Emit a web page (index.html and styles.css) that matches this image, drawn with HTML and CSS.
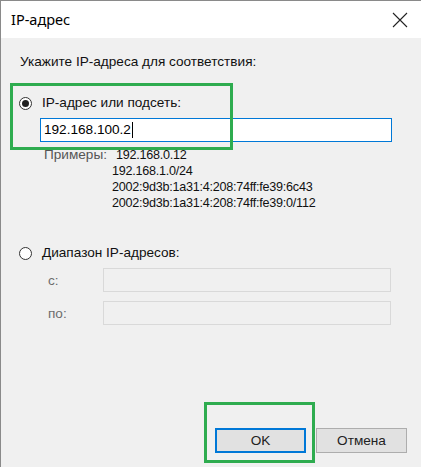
FILE: index.html
```html
<!DOCTYPE html>
<html lang="ru">
<head>
<meta charset="utf-8">
<title>IP-адрес</title>
<link rel="stylesheet" href="styles.css">
</head>
<body>
<div class="window">
  <div class="titlebar">
    <span class="title">IP-адрес</span>
    <svg class="close" width="16" height="16" viewBox="0 0 16 16"><path d="M1 1 L15 15 M15 1 L1 15" stroke="#222" stroke-width="1.1" fill="none"/></svg>
  </div>
  <div class="content">
    <div class="intro">Укажите IP-адреса для соответствия:</div>
    <div class="radio-row first">
      <span class="radio checked"></span>
      <span class="label">IP-адрес или подсеть:</span>
    </div>
    <div class="ip-input">192.168.100.2<span class="caret"></span></div>
    <div class="examples">
      <span class="ex-label">Примеры:</span>
      <div class="ex-values">
        <div class="ex-first">192.168.0.12</div>
        <div>192.168.1.0/24</div>
        <div>2002:9d3b:1a31:4:208:74ff:fe39:6c43</div>
        <div>2002:9d3b:1a31:4:208:74ff:fe39:0/112</div>
      </div>
    </div>
    <div class="radio-row second">
      <span class="radio"></span>
      <span class="label">Диапазон IP-адресов:</span>
    </div>
    <div class="range-row from">
      <span class="range-label">с:</span>
      <span class="range-input"></span>
    </div>
    <div class="range-row to">
      <span class="range-label">по:</span>
      <span class="range-input"></span>
    </div>
    <div class="spacer"></div>
    <div class="buttons">
      <button class="btn default">OK</button>
      <button class="btn">Отмена</button>
    </div>
  </div>
  <div class="mark mark-ip"></div>
  <div class="mark mark-ok"></div>
</div>
</body>
</html>
```

FILE: styles.css
```css
* { box-sizing: border-box; }
html, body { margin: 0; padding: 0; }
body {
  width: 421px;
  height: 467px;
  overflow: hidden;
  font-family: "Liberation Sans", Arial, sans-serif;
  font-size: 13.6px;
  color: #000;
  background: #f0f0f0;
}
.window {
  position: relative;
  width: 421px;
  height: 467px;
  border-top: 1px solid #8a8a8a;
  border-left: 1px solid #8a8a8a;
  display: flex;
  flex-direction: column;
  background: #f0f0f0;
}
.titlebar {
  height: 37px;
  flex: none;
  background: #fff;
  display: flex;
  align-items: center;
  justify-content: space-between;
  padding: 0 13px 0 10px;
}
.title {
  font-family: "Noto Sans", "Liberation Sans", sans-serif;
  font-size: 14.5px;
  color: #000;
  margin-top: -1px;
}
.close { display: block; }
.content {
  flex: 1;
  display: flex;
  flex-direction: column;
  padding: 14px 14px 14px 18px;
}
.intro { line-height: 16px; margin-left: 1px; margin-top: 2px; color: #111; }
.radio-row {
  display: flex;
  align-items: center;
  gap: 10px;
  height: 16px;
  line-height: 16px;
  color: #111;
}
.radio-row.first { margin-top: 25px; }
.radio-row.second { margin-top: 34px; }
.radio {
  width: 13px;
  height: 13px;
  border: 1px solid #333;
  border-radius: 50%;
  background: #fff;
  display: flex;
  align-items: center;
  justify-content: center;
  flex: none;
}
.radio.checked::after {
  content: "";
  width: 7px;
  height: 7px;
  border-radius: 50%;
  background: #222;
}
.ip-input {
  margin-top: 7px;
  margin-left: 21px;
  width: 352px;
  height: 24px;
  border: 1px solid #0078d7;
  background: #fff;
  font-size: 13.6px;
  line-height: 22px;
  padding-left: 3px;
  display: flex;
  align-items: center;
}
.caret {
  display: inline-block;
  width: 1px;
  height: 16px;
  background: #000;
  margin-left: 1px;
}
.examples {
  display: flex;
  margin-top: 5px;
  margin-left: 25px;
  line-height: 16px;
}
.ex-label { color: #555; width: 68px; flex: none; }
.ex-values { font-size: 12.6px; letter-spacing: -0.25px; color: #111; }
.ex-first { padding-left: 4px; }
.range-row {
  display: flex;
  align-items: center;
  margin-left: 29px;
}
.range-row.from { margin-top: 7px; }
.range-row.to { margin-top: 9px; }
.range-label { width: 55px; color: #6d6d6d; flex: none; }
.range-input {
  width: 288px;
  height: 24px;
  border: 1px solid #d9d9d9;
  background: #f0f0f0;
}
.spacer { flex: 1; }
.buttons {
  display: flex;
  justify-content: flex-end;
  gap: 10px;
}
.btn {
  width: 91px;
  height: 25px;
  border: 1px solid #adadad;
  background: #e1e1e1;
  font-family: "Liberation Sans", Arial, sans-serif;
  font-size: 13.6px;
  font-weight: normal;
  color: #222;
  padding: 0;
}
.btn.default { border: 2px solid #0078d7; }
.mark {
  position: absolute;
  border: 3px solid #2eac4f;
  pointer-events: none;
}
.mark-ip { left: 9px; top: 82px; width: 223px; height: 67px; }
.mark-ok { left: 203px; top: 401px; width: 111px; height: 61px; }
```
